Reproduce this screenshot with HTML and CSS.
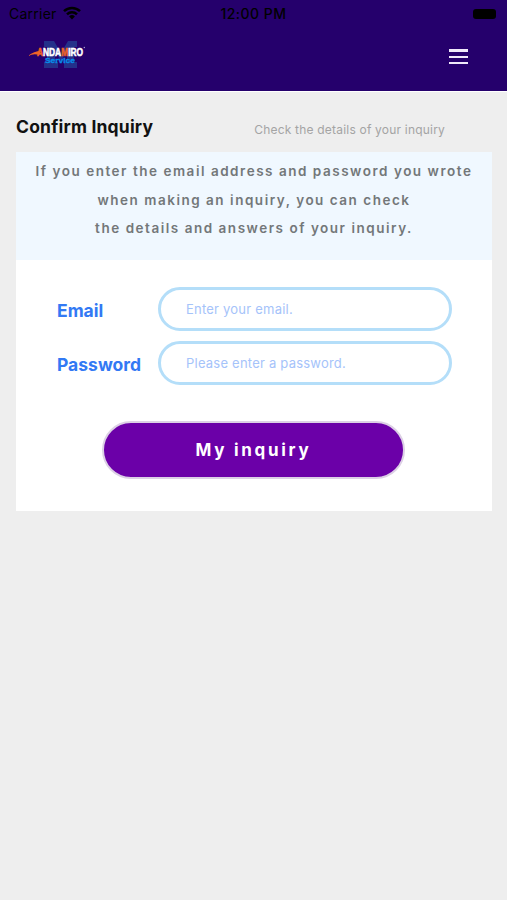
FILE: index.html
```html
<!DOCTYPE html>
<html lang="en">
<head>
<meta charset="utf-8">
<title>Confirm Inquiry</title>
<link rel="stylesheet" href="styles.css">
</head>
<body>
<header class="header">
  <div class="status">
    <div class="carrier">
      <span>Carrier</span>
      <svg class="wifi" viewBox="0 0 18 14" width="18" height="14">
        <path d="M1 5.2a11.5 11.5 0 0 1 16 0M4 8.3a7.2 7.2 0 0 1 10 0" fill="none" stroke="#000" stroke-width="2.5"/>
        <path d="M6.1 10.4a4.2 4.2 0 0 1 5.8 0L9 13.5z"/>
      </svg>
    </div>
    <span class="time">12:00 PM</span>
    <span class="battery"></span>
  </div>
  <div class="nav">
    <svg class="logo" viewBox="0 0 60 32" width="60" height="32">
      <path d="M16 2h10l7 12 7-12h9v6h-3v15h3v6H36v-6h3V12l-6 10-6-10v11h3v6H16v-6h3V8h-3z" fill="#24308a"/>
      <path d="M0 17Q6 12 13 12l-2 4Q6 14 0 17z" fill="#ef6426"/>
      <text class="brand" x="9" y="17" textLength="46" lengthAdjust="spacingAndGlyphs"><tspan class="accent">A</tspan>NDA<tspan class="accent">M</tspan>IRO</text>
      <circle cx="56.3" cy="8.5" r=".7" fill="#aaa4d0"/>
      <text class="service" x="17" y="23.5" textLength="30" lengthAdjust="spacingAndGlyphs">Service</text>
    </svg>
    <div class="menu"><i></i><i></i><i></i></div>
  </div>
</header>
<main class="page">
  <div class="heading">
    <h1>Confirm Inquiry</h1>
    <p>Check the details of your inquiry</p>
  </div>
  <section class="card">
    <div class="notice">
      <p>If you enter the email address and password you wrote</p>
      <p>when making an inquiry, you can check</p>
      <p>the details and answers of your inquiry.</p>
    </div>
    <form class="form">
      <div class="row">
        <label for="email">Email</label>
        <input id="email" type="email" placeholder="Enter your email.">
      </div>
      <div class="row">
        <label for="password">Password</label>
        <input id="password" type="password" placeholder="Please enter a password.">
      </div>
      <button type="button">My inquiry</button>
    </form>
  </section>
</main>
</body>
</html>
```
FILE: styles.css
```css
* { box-sizing: border-box; }
body { margin: 0; min-height: 900px; background: #eee; font-family: Inter, sans-serif; }
h1, p { margin: 0; white-space: nowrap; }
.header { height: 92px; background: #25006c; border-bottom: 1px solid #fff; }
.status { display: grid; grid-template-columns: 1fr auto 1fr; height: 27px; padding: 0 11px 0 9px; align-items: center; color: #000; font-size: 14px; }
.carrier { display: flex; gap: 6px; align-items: center; letter-spacing: .25px; }
.wifi { margin-top: -2px; }
.time { margin-left: 2px; font-weight: 500; letter-spacing: .5px; }
.battery { justify-self: end; width: 23px; height: 10px; border-radius: 3px; background: #000; }
.nav { display: flex; justify-content: space-between; align-items: center; height: 57px; padding: 0 39px 0 28px; }
.logo { margin-top: -1px; }
.brand { font: 700 11.5px "Liberation Sans", sans-serif; fill: #fff; stroke: #fff; stroke-width: .6px; }
.accent { fill: #ef6426; stroke: #ef6426; }
.service { font: 700 6.5px "Liberation Sans", sans-serif; fill: #078be8; stroke: #078be8; stroke-width: .3px; }
.menu { display: flex; flex-direction: column; gap: 4px; width: 19px; margin-top: 2px; }
.menu i { height: 2px; background: #f0e9fa; }
.menu i:first-child { height: 3px; }
.page { padding: 0 15px 0 16px; }
.heading { display: flex; justify-content: space-between; height: 60px; padding-right: 47px; }
h1 { padding-top: 24px; font-size: 17.5px; line-height: 22px; font-weight: 700; letter-spacing: .2px; color: #111; }
.heading p { padding-top: 29px; font-size: 12px; line-height: 18px; letter-spacing: .2px; color: #a4a4a4; }
.card { height: 359px; background: #fff; }
.notice { height: 108px; padding-top: 5px; background: #f0f8ff; color: #737779; font-size: 13.5px; font-weight: 600; line-height: 28.5px; letter-spacing: 1.52px; text-align: center; }
.form { display: flex; flex-direction: column; gap: 10px; padding: 27px 40px 0 41px; }
.row { display: flex; align-items: center; }
label { width: 101px; padding-top: 2px; color: #3279f4; font-size: 17.5px; font-weight: 700; }
input { width: 294px; height: 44px; padding: 0 26px 1px 25px; border: 3px solid #b4def9; border-radius: 22px; background: #fff; font: 13px Inter, sans-serif; letter-spacing: .22px; }
input::placeholder { color: #a5c3fa; opacity: 1; }
button { width: 303px; height: 58px; margin: 26px 0 0 45px; padding: 0 0 1px; border: 2px solid #dcd0e5; border-radius: 29px; background: #6b00a8; color: #fff; font: 700 17px Inter, sans-serif; letter-spacing: 2.7px; }
```
